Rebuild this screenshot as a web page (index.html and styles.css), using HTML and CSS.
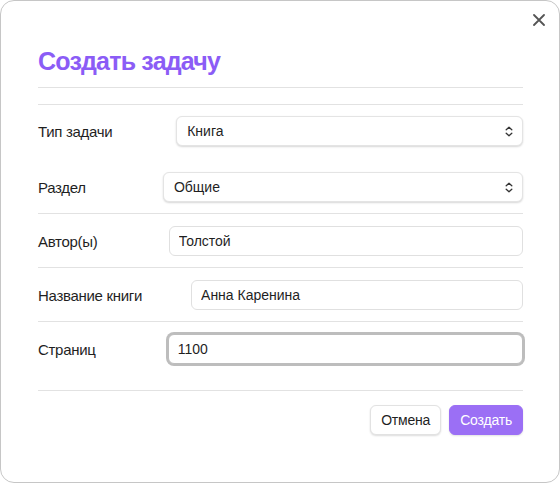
FILE: index.html
```html
<!DOCTYPE html>
<html lang="ru">
<head>
<meta charset="utf-8">
<link rel="stylesheet" href="styles.css">
</head>
<body>
<div class="dialog">
  <button class="close" aria-label="Закрыть">
    <svg width="12" height="12" viewBox="0 0 12 12"><path d="M1 1L11 11M11 1L1 11" stroke="#555" stroke-width="1.8" stroke-linecap="round"/></svg>
  </button>
  <header class="head">
    <h1 class="title">Создать задачу</h1>
  </header>
  <form class="form">
    <div class="row noline first">
      <label class="label">Тип задачи</label>
      <div class="select">
        <select><option>Книга</option></select>
        <svg class="chev" width="8" height="11" viewBox="0 0 8 11"><path d="M1.2 3.8L4 1.2L6.8 3.8M1.2 7.2L4 9.8L6.8 7.2" fill="none" stroke="#333" stroke-width="1.3" stroke-linecap="round" stroke-linejoin="round"/></svg>
      </div>
    </div>
    <div class="row">
      <label class="label">Раздел</label>
      <div class="select">
        <select><option>Общие</option></select>
        <svg class="chev" width="8" height="11" viewBox="0 0 8 11"><path d="M1.2 3.8L4 1.2L6.8 3.8M1.2 7.2L4 9.8L6.8 7.2" fill="none" stroke="#333" stroke-width="1.3" stroke-linecap="round" stroke-linejoin="round"/></svg>
      </div>
    </div>
    <div class="row">
      <label class="label">Автор(ы)</label>
      <input class="input" type="text" value="Толстой">
    </div>
    <div class="row">
      <label class="label">Название книги</label>
      <input class="input" type="text" value="Анна Каренина">
    </div>
    <div class="row noline">
      <label class="label">Страниц</label>
      <input class="input focus" type="text" value="1100">
    </div>
    <div class="footer">
      <button type="button" class="btn">Отмена</button>
      <button type="button" class="btn primary">Создать</button>
    </div>
  </form>
</div>
</body>
</html>
```
FILE: styles.css
```css
* { box-sizing: border-box; }
html, body { margin: 0; padding: 0; background: #fff; }
body { font-family: "Liberation Sans", Arial, sans-serif; color: #1f1f1f; }

.dialog {
  position: relative;
  width: 560px;
  height: 483px;
  border: 1px solid #c6c6c6;
  border-radius: 14px;
  padding: 0 36px 0 37px;
  background: #fff;
}

.close {
  position: absolute;
  top: 12px;
  right: 13px;
  width: 14px;
  height: 14px;
  padding: 0;
  border: 0;
  background: none;
  display: flex;
  align-items: center;
  justify-content: center;
}

.head {
  padding-top: 45px;
  padding-bottom: 10px;
  border-bottom: 1px solid #e2e2e2;
}
.title {
  margin: 0;
  font-size: 25px;
  line-height: 31px;
  letter-spacing: -0.8px;
  font-weight: 700;
  color: #8b5cf6;
}

.form {
  margin: 16px 0 0;
  border-top: 1px solid #e2e2e2;
}

.row {
  display: flex;
  align-items: center;
  padding: 11px 0 11px;
  border-bottom: 1px solid #e2e2e2;
}
.row.noline { border-bottom-color: transparent; }
.row.first { padding-bottom: 13px; }
.row + .row { padding-top: 12px; }

.label {
  flex: 1 1 auto;
  font-size: 15px;
  letter-spacing: -0.3px;
  color: #1f1f1f;
}

.select, .input {
  flex: 1 1 283px;
  min-width: 0;
}

.select { position: relative; }
.select select {
  display: block;
  width: 100%;
  height: 30px;
  appearance: none;
  -webkit-appearance: none;
  border: 1px solid #e4e4e4;
  border-radius: 6px;
  background: #fff;
  box-shadow: 0 1px 2px rgba(0,0,0,0.16);
  padding: 0 10px;
  font: 14px "Liberation Sans", Arial, sans-serif;
  color: #1f1f1f;
}
.chev {
  position: absolute;
  right: 10px;
  top: 10px;
  pointer-events: none;
}

.input {
  height: 30px;
  border: 1px solid #e0e0e0;
  border-radius: 6px;
  padding: 0 9px;
  font: 14px "Liberation Sans", Arial, sans-serif;
  color: #1f1f1f;
  background: #fff;
  outline: none;
}
.input.focus {
  border: 1px solid #bdbdbd;
  box-shadow: 0 0 0 2px #bdbdbd;
}

.footer {
  display: flex;
  justify-content: flex-end;
  gap: 8px;
  margin-top: 14px;
  padding-top: 14px;
  border-top: 1px solid #e2e2e2;
}
.btn {
  height: 30px;
  padding: 0 10px;
  border: 1px solid #e2e2e2;
  border-radius: 6px;
  background: #fff;
  box-shadow: 0 1px 2px rgba(0,0,0,0.14);
  font: 14px "Liberation Sans", Arial, sans-serif;
  letter-spacing: -0.2px;
  color: #1f1f1f;
}
.btn.primary {
  background: #9b6ff5;
  border-color: #9b6ff5;
  color: #fff;
  box-shadow: 0 1px 2px rgba(0,0,0,0.12);
}
```
